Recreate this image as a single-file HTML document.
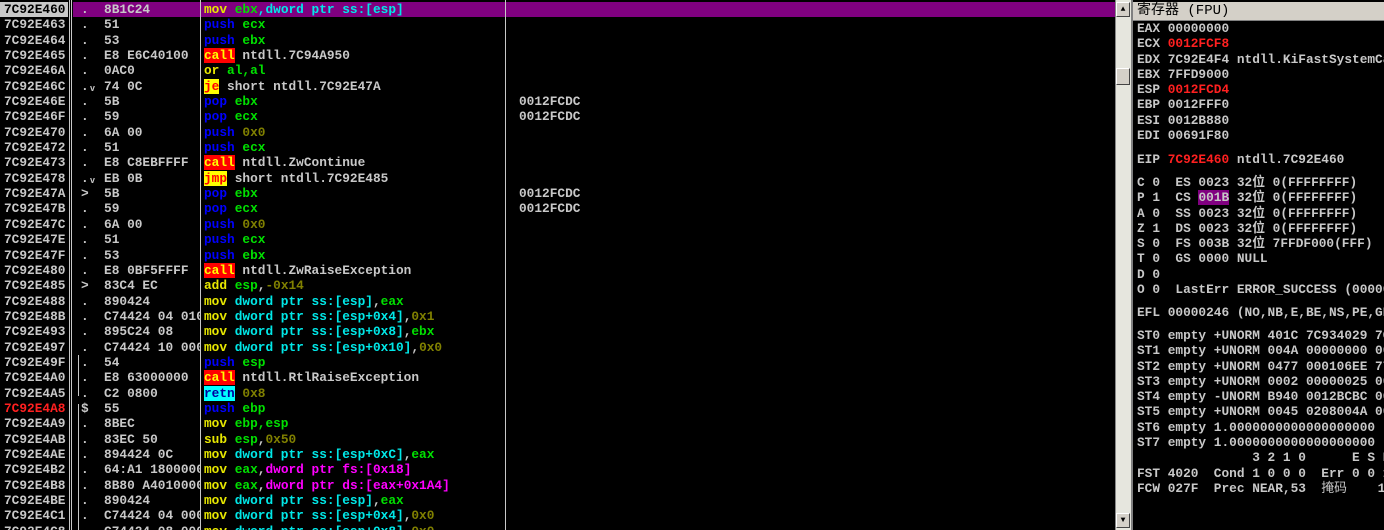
<!DOCTYPE html>
<html><head><meta charset="utf-8"><style>
html,body{margin:0;width:1384px;height:530px;overflow:hidden}
body{background:#000;position:relative;font-family:"Liberation Mono","Noto Sans CJK SC",monospace;font-weight:bold;font-size:12.8px;color:#c8c8c8}
.col{position:absolute;top:2px;overflow:hidden;height:528px}
.col div{height:15.35px;line-height:15.35px;white-space:pre}
.vl{position:absolute;top:0;height:530px;width:1px;background:#c8c8c8}
.y{color:#e8e800}.b{color:#0000ff}.g{color:#00e000}.c{color:#00e8e8}.m{color:#ff00ff}.o{color:#808000}.r{color:#ff2020}
.call{background:#ff0000;color:#ffff00}.jx{background:#ffff00;color:#ff0000}.ret{background:#00ffff;color:#0000a0}
.reg{position:absolute;left:1137px;white-space:pre;font-size:12.8px;line-height:15.3px}
</style></head><body>
<div style="position:absolute;left:73px;top:2px;width:1042px;height:15px;background:#800080"></div>
<div style="position:absolute;left:0;top:2px;width:68px;height:15px;background:#c8c8c8"></div>
<div class="vl" style="left:69px"></div><div class="vl" style="left:71px"></div>
<div class="vl" style="left:200px"></div><div class="vl" style="left:505px"></div>
<div style="position:absolute;left:78px;top:355px;width:1px;height:41px;background:#c8c8c8"></div>
<div style="position:absolute;left:78px;top:404px;width:1px;height:126px;background:#c8c8c8"></div>
<div class="col" style="left:4px;width:64px"><div style="color:#000">7C92E460</div><div>7C92E463</div><div>7C92E464</div><div>7C92E465</div><div>7C92E46A</div><div>7C92E46C</div><div>7C92E46E</div><div>7C92E46F</div><div>7C92E470</div><div>7C92E472</div><div>7C92E473</div><div>7C92E478</div><div>7C92E47A</div><div>7C92E47B</div><div>7C92E47C</div><div>7C92E47E</div><div>7C92E47F</div><div>7C92E480</div><div>7C92E485</div><div>7C92E488</div><div>7C92E48B</div><div>7C92E493</div><div>7C92E497</div><div>7C92E49F</div><div>7C92E4A0</div><div>7C92E4A5</div><div class="r">7C92E4A8</div><div>7C92E4A9</div><div>7C92E4AB</div><div>7C92E4AE</div><div>7C92E4B2</div><div>7C92E4B8</div><div>7C92E4BE</div><div>7C92E4C1</div><div>7C92E4C8</div></div>
<div class="col" style="left:81px;width:119px"><div>.  8B1C24</div><div>.  51</div><div>.  53</div><div>.  E8 E6C40100</div><div>.  0AC0</div><div>.ᵥ 74 0C</div><div>.  5B</div><div>.  59</div><div>.  6A 00</div><div>.  51</div><div>.  E8 C8EBFFFF</div><div>.ᵥ EB 0B</div><div>&gt;  5B</div><div>.  59</div><div>.  6A 00</div><div>.  51</div><div>.  53</div><div>.  E8 0BF5FFFF</div><div>&gt;  83C4 EC</div><div>.  890424</div><div>.  C74424 04 01000000</div><div>.  895C24 08</div><div>.  C74424 10 00000000</div><div>.  54</div><div>.  E8 63000000</div><div>.  C2 0800</div><div>$  55</div><div>.  8BEC</div><div>.  83EC 50</div><div>.  894424 0C</div><div>.  64:A1 18000000</div><div>.  8B80 A4010000</div><div>.  890424</div><div>.  C74424 04 00000000</div><div>.  C74424 08 00000000</div></div>
<div class="col" style="left:204px;width:300px"><div><span class="y">mov</span> <span class="g">ebx</span><span class="c">,dword ptr ss:[esp]</span></div><div><span class="b">push</span> <span class="g">ecx</span></div><div><span class="b">push</span> <span class="g">ebx</span></div><div><span class="call">call</span> ntdll.7C94A950</div><div><span class="y">or</span> <span class="g">al,al</span></div><div><span class="jx">je</span> short ntdll.7C92E47A</div><div><span class="b">pop</span> <span class="g">ebx</span></div><div><span class="b">pop</span> <span class="g">ecx</span></div><div><span class="b">push</span> <span class="o">0x0</span></div><div><span class="b">push</span> <span class="g">ecx</span></div><div><span class="call">call</span> ntdll.ZwContinue</div><div><span class="jx">jmp</span> short ntdll.7C92E485</div><div><span class="b">pop</span> <span class="g">ebx</span></div><div><span class="b">pop</span> <span class="g">ecx</span></div><div><span class="b">push</span> <span class="o">0x0</span></div><div><span class="b">push</span> <span class="g">ecx</span></div><div><span class="b">push</span> <span class="g">ebx</span></div><div><span class="call">call</span> ntdll.ZwRaiseException</div><div><span class="y">add</span> <span class="g">esp</span>,<span class="o">-0x14</span></div><div><span class="y">mov</span> <span class="c">dword ptr ss:[esp]</span>,<span class="g">eax</span></div><div><span class="y">mov</span> <span class="c">dword ptr ss:[esp+0x4]</span>,<span class="o">0x1</span></div><div><span class="y">mov</span> <span class="c">dword ptr ss:[esp+0x8]</span>,<span class="g">ebx</span></div><div><span class="y">mov</span> <span class="c">dword ptr ss:[esp+0x10]</span>,<span class="o">0x0</span></div><div><span class="b">push</span> <span class="g">esp</span></div><div><span class="call">call</span> ntdll.RtlRaiseException</div><div><span class="ret">retn</span> <span class="o">0x8</span></div><div><span class="b">push</span> <span class="g">ebp</span></div><div><span class="y">mov</span> <span class="g">ebp,esp</span></div><div><span class="y">sub</span> <span class="g">esp</span>,<span class="o">0x50</span></div><div><span class="y">mov</span> <span class="c">dword ptr ss:[esp+0xC]</span>,<span class="g">eax</span></div><div><span class="y">mov</span> <span class="g">eax</span>,<span class="m">dword ptr fs:[0x18]</span></div><div><span class="y">mov</span> <span class="g">eax</span>,<span class="m">dword ptr ds:[eax+0x1A4]</span></div><div><span class="y">mov</span> <span class="c">dword ptr ss:[esp]</span>,<span class="g">eax</span></div><div><span class="y">mov</span> <span class="c">dword ptr ss:[esp+0x4]</span>,<span class="o">0x0</span></div><div><span class="y">mov</span> <span class="c">dword ptr ss:[esp+0x8]</span>,<span class="o">0x0</span></div></div>
<div class="col" style="left:519px;width:590px"><div> </div><div> </div><div> </div><div> </div><div> </div><div> </div><div>0012FCDC</div><div>0012FCDC</div><div> </div><div> </div><div> </div><div> </div><div>0012FCDC</div><div>0012FCDC</div></div>
<div style="position:absolute;left:1115px;top:0;width:16px;height:530px;background:#e6e6de;border-left:1px solid #888"></div>
<div style="position:absolute;left:1116px;top:2px;width:14px;height:15px;background:#d4d0c8;border:1px solid #fff;border-right-color:#444;border-bottom-color:#444;box-sizing:border-box;font-size:8px;text-align:center;line-height:13px;color:#000">▲</div>
<div style="position:absolute;left:1116px;top:68px;width:14px;height:17px;background:#d4d0c8;border:1px solid #fff;border-right-color:#444;border-bottom-color:#444;box-sizing:border-box"></div>
<div style="position:absolute;left:1116px;top:513px;width:14px;height:15px;background:#d4d0c8;border:1px solid #fff;border-right-color:#444;border-bottom-color:#444;box-sizing:border-box;font-size:8px;text-align:center;line-height:13px;color:#000">▼</div>
<div style="position:absolute;left:1131px;top:0;width:2px;height:530px;background:#808080"></div>
<div style="position:absolute;left:1133px;top:2px;width:251px;height:18px;background:#d4d0c8;border-bottom:1px solid #808080;color:#000;font-weight:normal;font-size:14px;line-height:18px;padding-left:4px;white-space:pre">寄存器 (FPU)</div>
<div class="reg" style="top:21px">EAX 00000000
ECX <span class="r">0012FCF8</span>
EDX 7C92E4F4 ntdll.KiFastSystemCall
EBX 7FFD9000
ESP <span class="r">0012FCD4</span>
EBP 0012FFF0
ESI 0012B880
EDI 00691F80</div>
<div class="reg" style="top:152px">EIP <span class="r">7C92E460</span> ntdll.7C92E460</div>
<div class="reg" style="top:175px">C 0  ES 0023 32位 0(FFFFFFFF)
P 1  CS <span style="background:#800080">001B</span> 32位 0(FFFFFFFF)
A 0  SS 0023 32位 0(FFFFFFFF)
Z 1  DS 0023 32位 0(FFFFFFFF)
S 0  FS 003B 32位 7FFDF000(FFF)
T 0  GS 0000 NULL
D 0
O 0  LastErr ERROR_SUCCESS (00000000)</div>
<div class="reg" style="top:305px">EFL 00000246 (NO,NB,E,BE,NS,PE,GE,LE)</div>
<div class="reg" style="top:328px">ST0 empty +UNORM 401C 7C934029 7C930000
ST1 empty +UNORM 004A 00000000 00000000
ST2 empty +UNORM 0477 000106EE 77000000
ST3 empty +UNORM 0002 00000025 00000000
ST4 empty -UNORM B940 0012BCBC 00000000
ST5 empty +UNORM 0045 0208004A 00000000
ST6 empty 1.0000000000000000000
ST7 empty 1.0000000000000000000
               3 2 1 0      E S P
FST 4020  Cond 1 0 0 0  Err 0 0 1
FCW 027F  Prec NEAR,53  <span style="font-weight:normal">掩码</span>    1 1 1</div>
</body></html>
